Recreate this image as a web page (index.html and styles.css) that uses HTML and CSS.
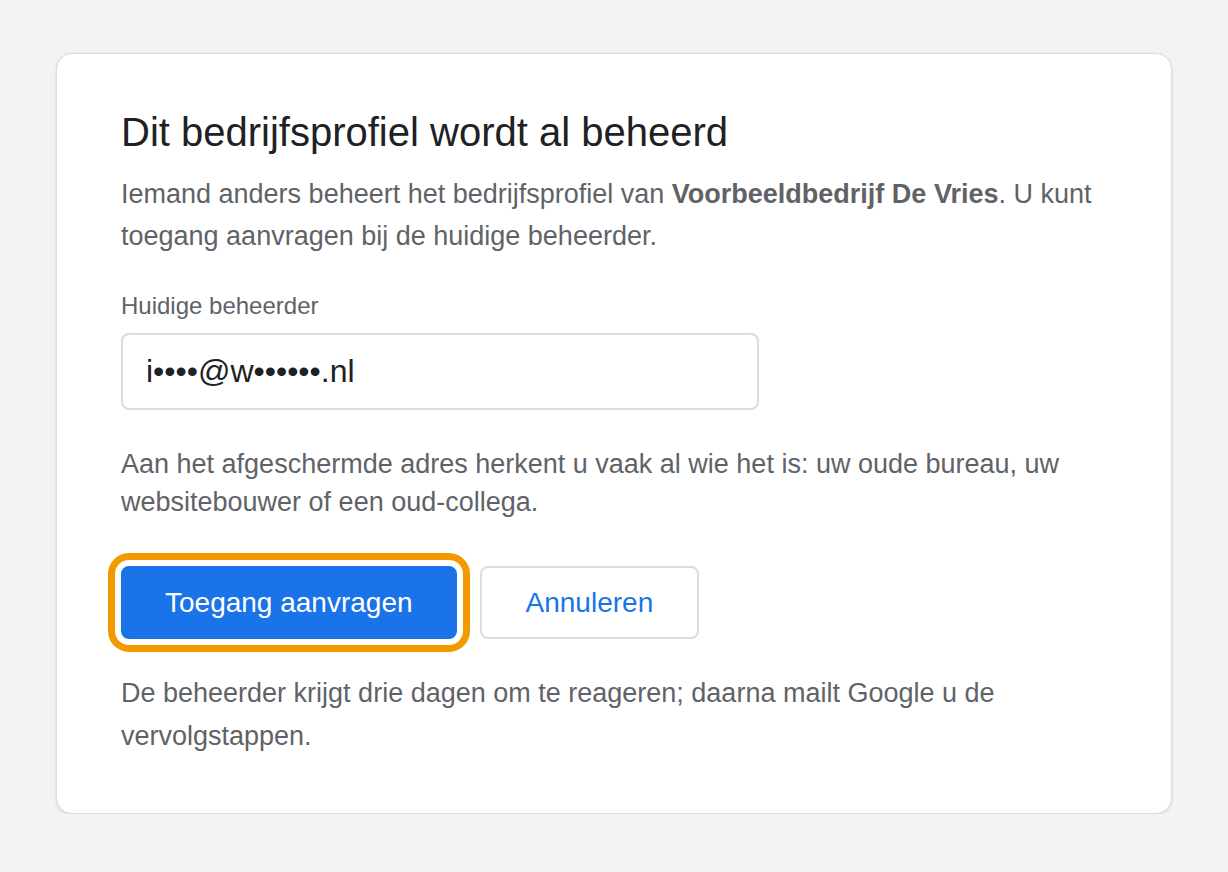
FILE: index.html
```html
<!DOCTYPE html>
<html lang="nl">
<head>
<meta charset="UTF-8">
<meta name="viewport" content="width=device-width, initial-scale=1.0">
<title>Bedrijfsprofiel wordt al beheerd</title>
<link rel="stylesheet" href="styles.css">
</head>
<body>
  <div class="card">
    <h1>Dit bedrijfsprofiel wordt al beheerd</h1>
    <p class="intro">Iemand anders beheert het bedrijfsprofiel van <strong>Voorbeeldbedrijf De Vries</strong>. U kunt toegang aanvragen bij de huidige beheerder.</p>
    <label class="field-label" for="owner">Huidige beheerder</label>
    <div class="field" id="owner">i••••@w••••••.nl</div>
    <p class="hint">Aan het afgeschermde adres herkent u vaak al wie het is: uw oude bureau, uw websitebouwer of een oud-collega.</p>
    <div class="actions">
      <button class="btn primary focused">Toegang aanvragen</button>
      <button class="btn secondary">Annuleren</button>
    </div>
    <p class="note">De beheerder krijgt drie dagen om te reageren; daarna mailt Google u de vervolgstappen.</p>
  </div>
</body>
</html>
```

FILE: styles.css
```css
body { background-color: #f1f3f4; margin: 0; padding: 53px 0 0; font-family: "Liberation Sans", Arial, Helvetica, sans-serif; color: #5f6368; }
.card { width: 1116px; box-sizing: border-box; margin: 0 auto; background: #fff; border: 1px solid #dadce0; border-radius: 16px; box-shadow: 0 1px 3px rgba(60, 64, 67, 0.15); padding: 54px 64px 55px; }
h1 { font-size: 40px; line-height: 48px; font-weight: 400; color: #202124; margin: 0; }
.intro { font-size: 27px; line-height: 42px; margin: 17px 0 0; }
.intro strong { color: #5f6368; font-weight: 700; }
.field-label { display: block; font-size: 24px; line-height: 30px; margin-top: 34px; }
.field { box-sizing: border-box; width: 638px; height: 77px; margin-top: 12px; border: 2px solid #dadce0; border-radius: 8px; padding: 0 23px; display: flex; align-items: center; font-size: 32px; color: #202124; }
.hint { font-size: 27px; line-height: 38px; margin: 35px 0 0; }
.actions { display: flex; gap: 23px; margin-top: 45px; }
.btn { box-sizing: border-box; height: 73px; padding: 0 42px; border: 2px solid #dadce0; border-radius: 8px; font-family: inherit; font-size: 28px; background: #fff; color: #1a73e8; cursor: pointer; }
.btn.primary { background: #1a73e8; border-color: #1a73e8; color: #fff; }
.btn.secondary { padding: 0 44px; }
.btn.focused { outline: 7px solid #f29900; outline-offset: 6px; }
.note { font-size: 27px; line-height: 43px; margin: 33px 0 0; }
```
